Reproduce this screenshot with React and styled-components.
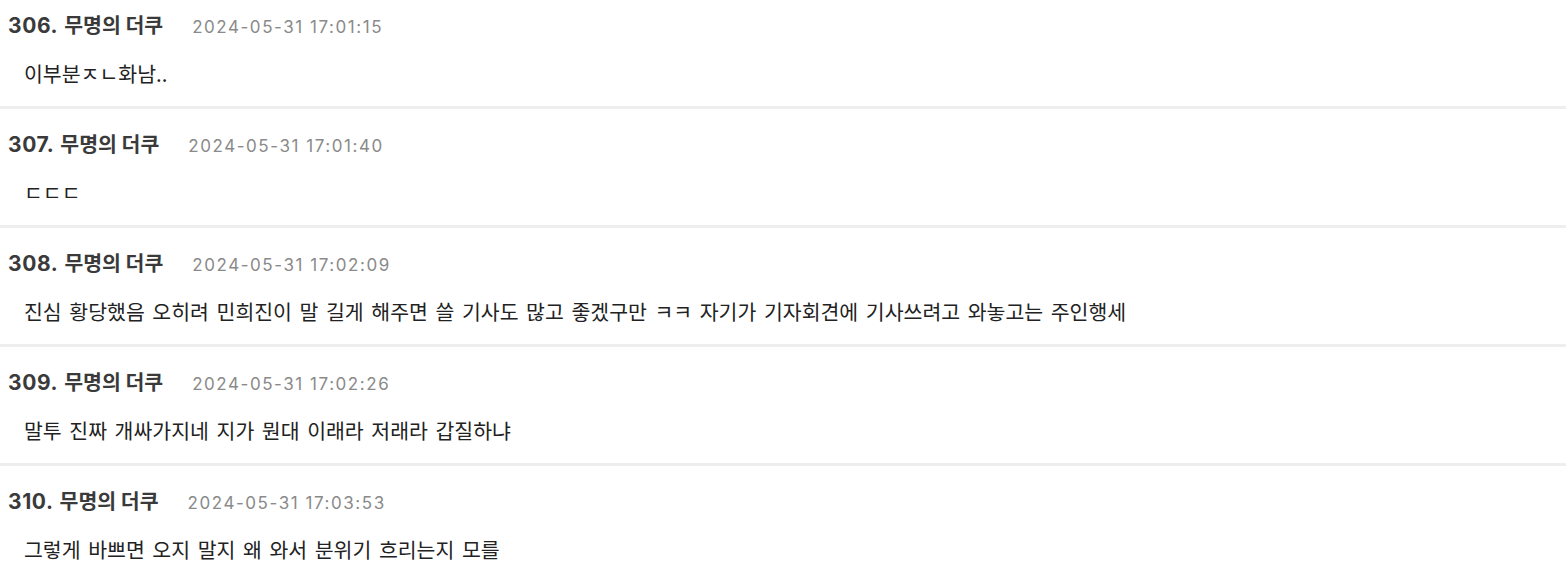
import React from 'react'
import styled, { createGlobalStyle } from 'styled-components'

const GlobalStyle = createGlobalStyle`
  html, body {
    margin: 0;
    padding: 0;
    background: #fff;
  }
  body {
    font-family: "Noto Sans CJK KR", "Noto Sans", sans-serif;
    color: #222;
    -webkit-font-smoothing: antialiased;
  }
`

const posts = [
  { no: 306, name: '무명의 더쿠', time: '2024-05-31 17:01:15', text: '이부분ㅈㄴ화남..' },
  { no: 307, name: '무명의 더쿠', time: '2024-05-31 17:01:40', text: 'ㄷㄷㄷ' },
  { no: 308, name: '무명의 더쿠', time: '2024-05-31 17:02:09', text: '진심 황당했음 오히려 민희진이 말 길게 해주면 쓸 기사도 많고 좋겠구만 ㅋㅋ 자기가 기자회견에 기사쓰려고 와놓고는 주인행세' },
  { no: 309, name: '무명의 더쿠', time: '2024-05-31 17:02:26', text: '말투 진짜 개싸가지네 지가 뭔대 이래라 저래라 갑질하냐' },
  { no: 310, name: '무명의 더쿠', time: '2024-05-31 17:03:53', text: '그렇게 바쁘면 오지 말지 왜 와서 분위기 흐리는지 모를' },
]

const List = styled.ul`
  list-style: none;
  margin: 0;
  padding: 0;
`

const Post = styled.li`
  padding: 20px 0 19px;
  border-bottom: 3px solid #eeeeee;

  &:first-child {
    padding-top: 10px;
  }
`

const Header = styled.div`
  display: flex;
  align-items: baseline;
  padding-left: 8px;
  height: 28px;
  line-height: 28px;
`

const Num = styled.span`
  font-family: Inter, "Noto Sans", sans-serif;
  font-size: 21px;
  font-weight: 700;
  letter-spacing: 0.6px;
  color: #3a3a3a;
  margin-right: 6px;
`

const Author = styled.span`
  font-size: 20.5px;
  font-weight: 700;
  color: #3a3a3a;
  margin-right: 29px;
`

const Time = styled.span`
  font-family: Inter, "Noto Sans", sans-serif;
  font-size: 17px;
  letter-spacing: 1.55px;
  color: #8a8a8a;
`

const Body = styled.p`
  margin: 21px 0 0;
  padding-left: 24px;
  font-size: 20.5px;
  line-height: 28px;
  word-spacing: 3px;
  color: #222;
`

const App = () =>
  <>
    <GlobalStyle/>
    <List>
      {posts.map(p =>
        <Post key={p.no}>
          <Header>
            <Num>{p.no}.</Num>
            <Author>{p.name}</Author>
            <Time>{p.time}</Time>
          </Header>
          <Body>{p.text}</Body>
        </Post>
      )}
    </List>
  </>

export default App
